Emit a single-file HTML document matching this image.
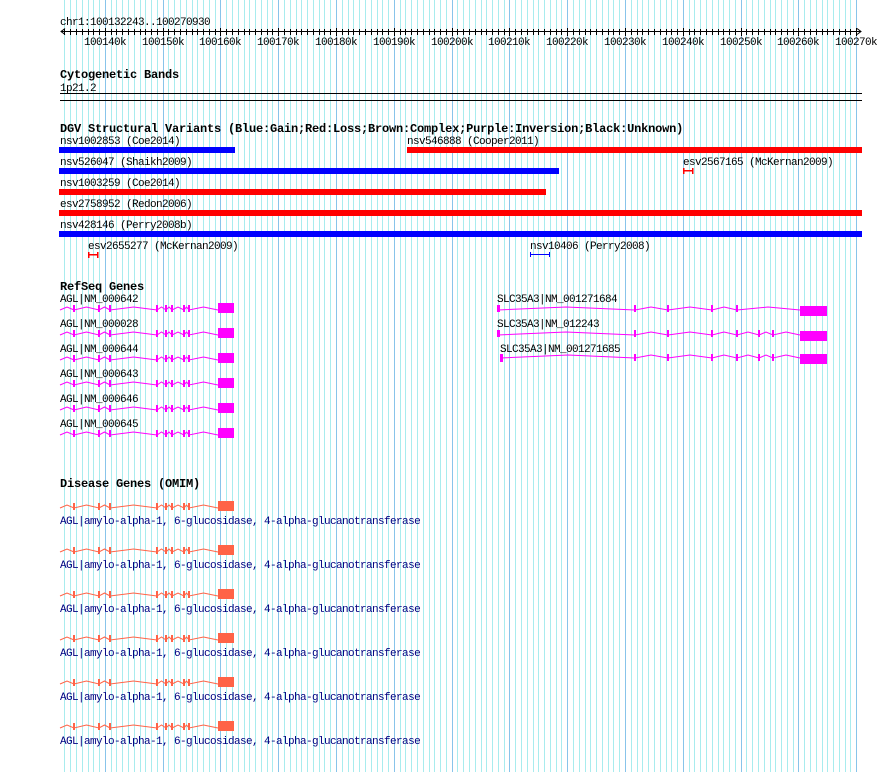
<!DOCTYPE html>
<html><head><meta charset="utf-8"><style>
html,body{margin:0;padding:0;background:#fff;width:890px;height:772px;overflow:hidden}
svg{display:block}
text{font-family:"Liberation Mono",monospace;font-size:11px;letter-spacing:-0.6px;fill:#000}
.b{font-weight:bold;font-size:12px;letter-spacing:-0.2px}
.d{fill:#000080}
</style></head><body>
<svg width="890" height="772" viewBox="0 0 890 772" xmlns="http://www.w3.org/2000/svg">
<defs>
<g id="agl">
<polyline fill="none" stroke="#f0f" stroke-width="1" points="60,8 67,5 74,8 86.5,5 99,8 104.5,5 110,8 133.5,5 157,8 161.5,5 166,8 169,5 172,8 178,5 184,8 186.5,5 189,8 203.5,5 218,8"/>
<g fill="#f0f"><rect x="73" y="3" width="2" height="7"/><rect x="98" y="3" width="2" height="7"/><rect x="109" y="3" width="2" height="7"/><rect x="156" y="3" width="2" height="7"/><rect x="165" y="3" width="2" height="7"/><rect x="171" y="3" width="2" height="7"/><rect x="183" y="3" width="2" height="7"/><rect x="188" y="3" width="2" height="7"/><rect x="218" y="1" width="16" height="10"/></g>
</g>
<g id="dis">
<polyline fill="none" stroke="#ff6347" stroke-width="1" points="60,8 67,5 74,8 86.5,5 99,8 104.5,5 110,8 133.5,5 157,8 161.5,5 166,8 169,5 172,8 178,5 184,8 186.5,5 189,8 203.5,5 218,8"/>
<g fill="#ff6347"><rect x="73" y="3" width="2" height="7"/><rect x="98" y="3" width="2" height="7"/><rect x="109" y="3" width="2" height="7"/><rect x="156" y="3" width="2" height="7"/><rect x="165" y="3" width="2" height="7"/><rect x="171" y="3" width="2" height="7"/><rect x="183" y="3" width="2" height="7"/><rect x="188" y="3" width="2" height="7"/><rect x="218" y="1" width="16" height="10"/></g>
</g>
</defs>
<path stroke="#a8ecee" stroke-width="1" fill="none" d="M64.5 0V772M70.5 0V772M76.5 0V772M82.5 0V772M88.5 0V772M93.5 0V772M99.5 0V772M111.5 0V772M116.5 0V772M122.5 0V772M128.5 0V772M134.5 0V772M140.5 0V772M145.5 0V772M151.5 0V772M157.5 0V772M168.5 0V772M174.5 0V772M180.5 0V772M186.5 0V772M192.5 0V772M197.5 0V772M203.5 0V772M209.5 0V772M215.5 0V772M226.5 0V772M232.5 0V772M238.5 0V772M244.5 0V772M249.5 0V772M255.5 0V772M261.5 0V772M267.5 0V772M272.5 0V772M284.5 0V772M290.5 0V772M296.5 0V772M301.5 0V772M307.5 0V772M313.5 0V772M319.5 0V772M324.5 0V772M330.5 0V772M342.5 0V772M348.5 0V772M353.5 0V772M359.5 0V772M365.5 0V772M371.5 0V772M377.5 0V772M382.5 0V772M388.5 0V772M400.5 0V772M405.5 0V772M411.5 0V772M417.5 0V772M423.5 0V772M429.5 0V772M434.5 0V772M440.5 0V772M446.5 0V772M457.5 0V772M463.5 0V772M469.5 0V772M475.5 0V772M481.5 0V772M486.5 0V772M492.5 0V772M498.5 0V772M504.5 0V772M515.5 0V772M521.5 0V772M527.5 0V772M533.5 0V772M538.5 0V772M544.5 0V772M550.5 0V772M556.5 0V772M561.5 0V772M573.5 0V772M579.5 0V772M585.5 0V772M590.5 0V772M596.5 0V772M602.5 0V772M608.5 0V772M613.5 0V772M619.5 0V772M631.5 0V772M637.5 0V772M642.5 0V772M648.5 0V772M654.5 0V772M660.5 0V772M666.5 0V772M671.5 0V772M677.5 0V772M689.5 0V772M694.5 0V772M700.5 0V772M706.5 0V772M712.5 0V772M718.5 0V772M723.5 0V772M729.5 0V772M735.5 0V772M746.5 0V772M752.5 0V772M758.5 0V772M764.5 0V772M770.5 0V772M775.5 0V772M781.5 0V772M787.5 0V772M793.5 0V772M804.5 0V772M810.5 0V772M816.5 0V772M822.5 0V772M827.5 0V772M833.5 0V772M839.5 0V772M845.5 0V772M850.5 0V772"/>
<path stroke="#88c4ea" stroke-width="1" fill="none" d="M105.5 0V772M163.5 0V772M220.5 0V772M278.5 0V772M336.5 0V772M394.5 0V772M452.5 0V772M509.5 0V772M567.5 0V772M625.5 0V772M683.5 0V772M741.5 0V772M798.5 0V772M856.5 0V772"/>

<!-- ruler -->
<text x="60" y="25">chr1:100132243..100270930</text>
<line x1="61" y1="31.5" x2="861" y2="31.5" stroke="#000"/>
<polyline points="65,28.5 61,31.5 65,34.5" fill="none" stroke="#000"/>
<polyline points="857,28.5 861,31.5 857,34.5" fill="none" stroke="#000"/>
<path stroke="#000" stroke-width="1" fill="none" d="M64.5 29V35M70.5 29V35M76.5 29V35M82.5 29V35M88.5 29V35M93.5 29V35M99.5 29V35M105.5 28V36M111.5 29V35M116.5 29V35M122.5 29V35M128.5 29V35M134.5 29V35M140.5 29V35M145.5 29V35M151.5 29V35M157.5 29V35M163.5 28V36M168.5 29V35M174.5 29V35M180.5 29V35M186.5 29V35M192.5 29V35M197.5 29V35M203.5 29V35M209.5 29V35M215.5 29V35M220.5 28V36M226.5 29V35M232.5 29V35M238.5 29V35M244.5 29V35M249.5 29V35M255.5 29V35M261.5 29V35M267.5 29V35M272.5 29V35M278.5 28V36M284.5 29V35M290.5 29V35M296.5 29V35M301.5 29V35M307.5 29V35M313.5 29V35M319.5 29V35M324.5 29V35M330.5 29V35M336.5 28V36M342.5 29V35M348.5 29V35M353.5 29V35M359.5 29V35M365.5 29V35M371.5 29V35M377.5 29V35M382.5 29V35M388.5 29V35M394.5 28V36M400.5 29V35M405.5 29V35M411.5 29V35M417.5 29V35M423.5 29V35M429.5 29V35M434.5 29V35M440.5 29V35M446.5 29V35M452.5 28V36M457.5 29V35M463.5 29V35M469.5 29V35M475.5 29V35M481.5 29V35M486.5 29V35M492.5 29V35M498.5 29V35M504.5 29V35M509.5 28V36M515.5 29V35M521.5 29V35M527.5 29V35M533.5 29V35M538.5 29V35M544.5 29V35M550.5 29V35M556.5 29V35M561.5 29V35M567.5 28V36M573.5 29V35M579.5 29V35M585.5 29V35M590.5 29V35M596.5 29V35M602.5 29V35M608.5 29V35M613.5 29V35M619.5 29V35M625.5 28V36M631.5 29V35M637.5 29V35M642.5 29V35M648.5 29V35M654.5 29V35M660.5 29V35M666.5 29V35M671.5 29V35M677.5 29V35M683.5 28V36M689.5 29V35M694.5 29V35M700.5 29V35M706.5 29V35M712.5 29V35M718.5 29V35M723.5 29V35M729.5 29V35M735.5 29V35M741.5 28V36M746.5 29V35M752.5 29V35M758.5 29V35M764.5 29V35M770.5 29V35M775.5 29V35M781.5 29V35M787.5 29V35M793.5 29V35M798.5 28V36M804.5 29V35M810.5 29V35M816.5 29V35M822.5 29V35M827.5 29V35M833.5 29V35M839.5 29V35M845.5 29V35M850.5 29V35M856.5 28V36"/>
<g>
<text x="84" y="45">100140k</text><text x="142" y="45">100150k</text><text x="199" y="45">100160k</text><text x="257" y="45">100170k</text><text x="315" y="45">100180k</text><text x="373" y="45">100190k</text><text x="431" y="45">100200k</text><text x="488" y="45">100210k</text><text x="546" y="45">100220k</text><text x="604" y="45">100230k</text><text x="662" y="45">100240k</text><text x="720" y="45">100250k</text><text x="777" y="45">100260k</text><text x="835" y="45">100270k</text>
</g>

<text class="b" x="60" y="78">Cytogenetic Bands</text>
<text x="60" y="91">1p21.2</text>
<rect x="60" y="93" width="802" height="1" fill="#000"/>
<rect x="60" y="100" width="802" height="1" fill="#000"/>

<text class="b" x="60" y="132">DGV Structural Variants (Blue:Gain;Red:Loss;Brown:Complex;Purple:Inversion;Black:Unknown)</text>
<text x="60" y="144">nsv1002853 (Coe2014)</text>
<rect x="59" y="147" width="176" height="6" fill="#00f"/>
<text x="407" y="144">nsv546888 (Cooper2011)</text>
<rect x="407" y="147" width="455" height="6" fill="#f00"/>
<text x="60" y="165">nsv526047 (Shaikh2009)</text>
<rect x="59" y="168" width="500" height="6" fill="#00f"/>
<text x="683" y="165">esv2567165 (McKernan2009)</text>
<g fill="#f00"><rect x="683" y="170" width="10" height="1.5"/><rect x="683" y="168" width="1.5" height="6"/><rect x="692" y="168" width="1.5" height="6"/></g>
<text x="60" y="186">nsv1003259 (Coe2014)</text>
<rect x="59" y="189" width="487" height="6" fill="#f00"/>
<text x="60" y="207">esv2758952 (Redon2006)</text>
<rect x="59" y="210" width="803" height="6" fill="#f00"/>
<text x="60" y="228">nsv428146 (Perry2008b)</text>
<rect x="59" y="231" width="803" height="6" fill="#00f"/>
<text x="88" y="249">esv2655277 (McKernan2009)</text>
<g fill="#f00"><rect x="88" y="254" width="10" height="1.5"/><rect x="88" y="252" width="1.5" height="6"/><rect x="97" y="252" width="1.5" height="6"/></g>
<text x="530" y="249">nsv10406 (Perry2008)</text>
<g fill="#00f"><rect x="530" y="254" width="20" height="1"/><rect x="530" y="252" width="1" height="5"/><rect x="549" y="252" width="1" height="5"/></g>

<text class="b" x="60" y="290">RefSeq Genes</text>
<text x="60" y="302">AGL|NM_000642</text><use href="#agl" y="302"/>
<text x="60" y="327">AGL|NM_000028</text><use href="#agl" y="327"/>
<text x="60" y="352">AGL|NM_000644</text><use href="#agl" y="352"/>
<text x="60" y="377">AGL|NM_000643</text><use href="#agl" y="377"/>
<text x="60" y="402">AGL|NM_000646</text><use href="#agl" y="402"/>
<text x="60" y="427">AGL|NM_000645</text><use href="#agl" y="427"/>

<text x="497" y="302">SLC35A3|NM_001271684</text>
<g transform="translate(0,302)">
<polyline fill="none" stroke="#f0f" points="498,8 566,5 635,8 651,5 668,8 690,5 712,8 724,5 737,8 768,5 800,8"/>
<g fill="#f0f"><rect x="497" y="3" width="3" height="7"/><rect x="634" y="3" width="2" height="7"/><rect x="667" y="3" width="2" height="7"/><rect x="711" y="3" width="2" height="7"/><rect x="736" y="3" width="2" height="7"/><rect x="800" y="4" width="27" height="10"/></g>
</g>
<text x="497" y="327">SLC35A3|NM_012243</text>
<g transform="translate(0,327)">
<polyline fill="none" stroke="#f0f" points="498,8 566,5 635,8 651,5 668,8 690,5 712,8 724,5 737,8 748,5 759,8 766,5 773,8 786,5 800,8"/>
<g fill="#f0f"><rect x="497" y="3" width="3" height="7"/><rect x="634" y="3" width="2" height="7"/><rect x="667" y="3" width="2" height="7"/><rect x="711" y="3" width="2" height="7"/><rect x="736" y="3" width="2" height="7"/><rect x="758" y="3" width="2" height="7"/><rect x="772" y="3" width="2" height="7"/><rect x="800" y="4" width="27" height="10"/></g>
</g>
<text x="500" y="352">SLC35A3|NM_001271685</text>
<g transform="translate(0,352)">
<polyline fill="none" stroke="#f0f" points="501,6 568,3 635,6 651,3 668,6 690,3 712,6 724,3 737,6 748,3 759,6 766,3 773,6 786,3 800,6"/>
<g fill="#f0f"><rect x="500" y="2" width="3" height="8"/><rect x="634" y="2" width="2" height="7"/><rect x="667" y="2" width="2" height="7"/><rect x="711" y="2" width="2" height="7"/><rect x="736" y="2" width="2" height="7"/><rect x="758" y="2" width="2" height="7"/><rect x="772" y="2" width="2" height="7"/><rect x="800" y="2" width="27" height="10"/></g>
</g>

<text class="b" x="60" y="487">Disease Genes (OMIM)</text>
<use href="#dis" y="500"/><text class="d" x="60" y="524">AGL|amylo-alpha-1, 6-glucosidase, 4-alpha-glucanotransferase</text>
<use href="#dis" y="544"/><text class="d" x="60" y="568">AGL|amylo-alpha-1, 6-glucosidase, 4-alpha-glucanotransferase</text>
<use href="#dis" y="588"/><text class="d" x="60" y="612">AGL|amylo-alpha-1, 6-glucosidase, 4-alpha-glucanotransferase</text>
<use href="#dis" y="632"/><text class="d" x="60" y="656">AGL|amylo-alpha-1, 6-glucosidase, 4-alpha-glucanotransferase</text>
<use href="#dis" y="676"/><text class="d" x="60" y="700">AGL|amylo-alpha-1, 6-glucosidase, 4-alpha-glucanotransferase</text>
<use href="#dis" y="720"/><text class="d" x="60" y="744">AGL|amylo-alpha-1, 6-glucosidase, 4-alpha-glucanotransferase</text>
</svg>
</body></html>
